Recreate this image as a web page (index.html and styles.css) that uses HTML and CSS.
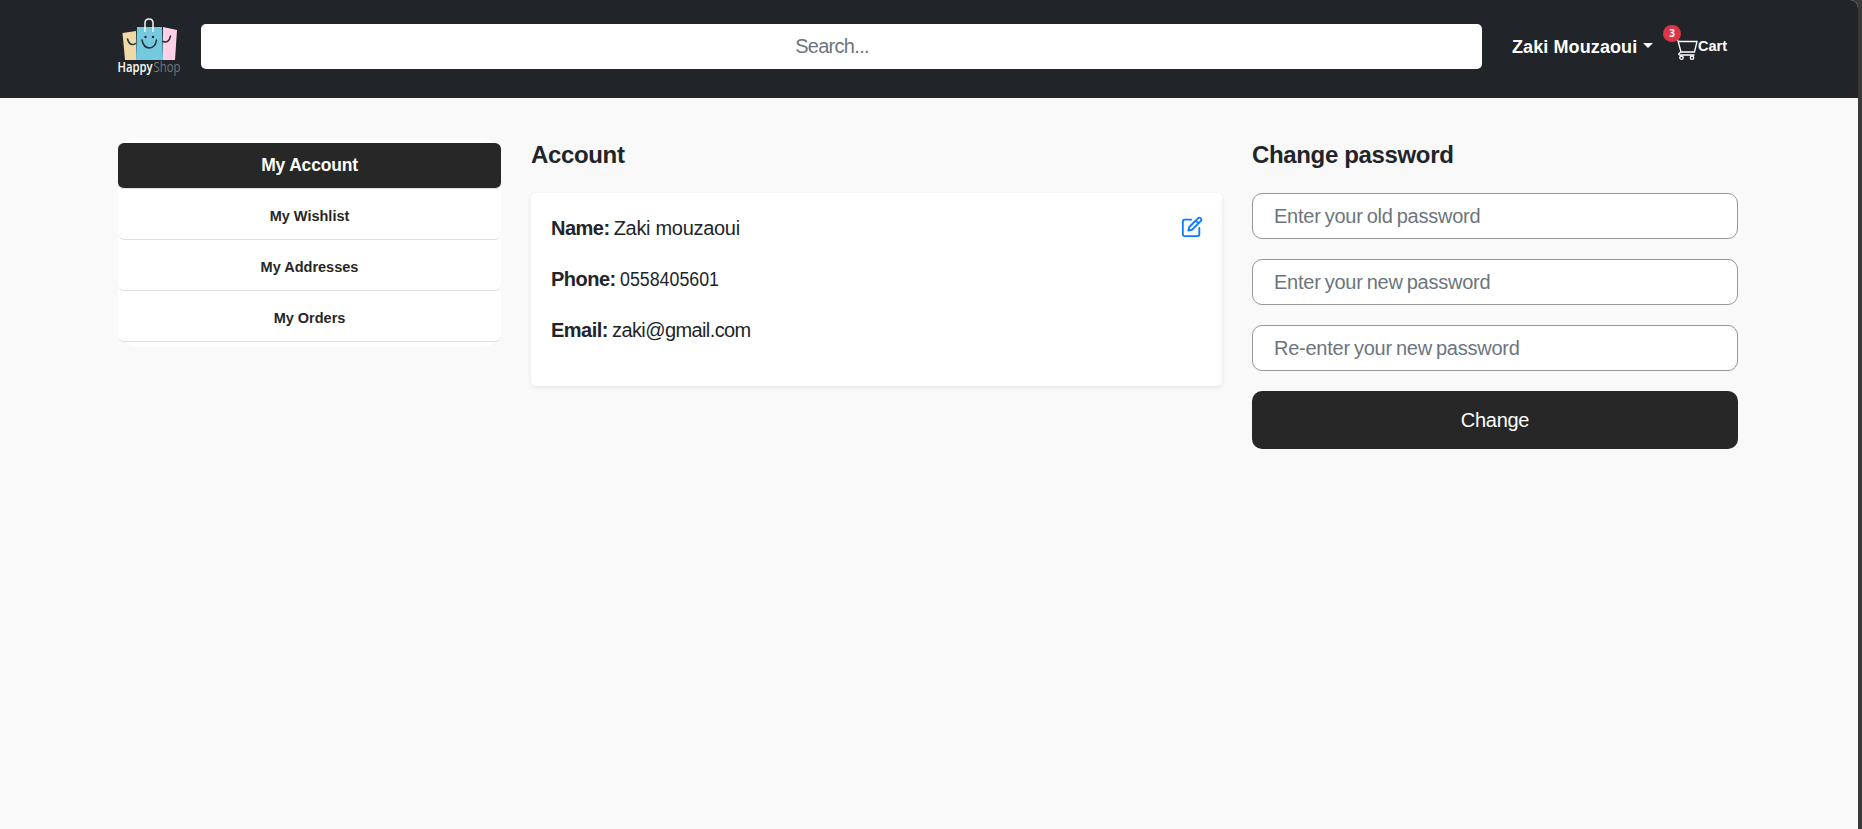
FILE: index.html
```html
<!DOCTYPE html>
<html lang="en">
<head>
<meta charset="utf-8">
<title>HappyShop - My Account</title>
<link rel="stylesheet" href="styles.css">
</head>
<body>
<div class="page">
  <header class="navbar">
    <svg class="logo" width="66" height="62" viewBox="0 0 66 62">
      <path d="M4.500 16 18 14V43H7Z" fill="#efd9a7"/>
      <path d="M45 10 59 13 57 43H45Z" fill="#ffd0e6"/>
      <path d="M19 10H44L45 43H18Z" fill="#74c9de"/>
      <g fill="none" stroke="#22313b" stroke-width="1.5" stroke-linecap="round">
        <path d="M24 23C26 33.500 37 33.500 38.500 23"/>
        <path d="M9.500 22C11 28 15 28.500 17.500 26.500"/>
        <path d="M45 24.500C49 26 51.500 24 52.500 19"/>
      </g>
      <circle cx="27.500" cy="20" r="1.200" fill="#22313b"/><circle cx="35" cy="20" r="1.200" fill="#22313b"/>
      <path d="M27 15V6C27 .5 35 .5 35 6V15" fill="none" stroke="#f2f6f7" stroke-width="1.500"/>
      <text class="logo-text" x="-.5" y="55" textLength="35" lengthAdjust="spacingAndGlyphs" font-weight="600" fill="#fff">Happy</text>
      <text class="logo-text" x="35.500" y="55" textLength="27" lengthAdjust="spacingAndGlyphs" fill="#73777b">Shop</text>
    </svg>
    <input class="search" type="text" placeholder="Search...">
    <div class="user">Zaki Mouzaoui<span class="caret"></span></div>
    <div class="cart">
      <svg class="cart-icon" width="21" height="22" viewBox="0 0 21 22" fill="none" stroke="#fff" stroke-width="1.300">
        <path d="M.5 0 4 13M1 2.500H20L17.500 13H4L2 14.500C1.500 15.500 2 16 3 16H17.500"/>
        <circle cx="4.500" cy="18.700" r="1.700"/><circle cx="15" cy="18.700" r="1.700"/>
      </svg>
      <span class="badge">3</span>
      <span class="cart-label">Cart</span>
    </div>
  </header>
  <main class="content">
    <nav class="menu">
      <a class="menu-item active">My Account</a>
      <a class="menu-item">My Wishlist</a>
      <a class="menu-item">My Addresses</a>
      <a class="menu-item">My Orders</a>
    </nav>
    <section class="account">
      <h2 class="title title-account">Account</h2>
      <div class="card">
        <div class="row"><b class="label">Name:</b><span class="value value-name">Zaki mouzaoui</span>
          <svg class="edit" width="22" height="22" viewBox="0 0 24 24" fill="none" stroke="#0d7bff" stroke-width="2" stroke-linecap="round" stroke-linejoin="round"><path d="M11 4H4a2 2 0 0 0-2 2v14a2 2 0 0 0 2 2h14a2 2 0 0 0 2-2v-7"/><path d="M18.500 2.500a2.121 2.121 0 0 1 3 3L12 15l-4 1 1-4 9.500-9.500zM16 5l3 3"/></svg>
        </div>
        <div class="row"><b class="label">Phone:</b><span class="value value-phone">0558405601</span></div>
        <div class="row"><b class="label">Email:</b><span class="value value-email">zaki@gmail.com</span></div>
      </div>
    </section>
    <section class="password">
      <h2 class="title">Change password</h2>
      <form class="form">
        <input class="field" type="password" placeholder="Enter your old password">
        <input class="field" type="password" placeholder="Enter your new password">
        <input class="field" type="password" placeholder="Re-enter your new password">
        <button class="change" type="button">Change</button>
      </form>
    </section>
  </main>
</div>
</body>
</html>
```
FILE: styles.css
```css
* { box-sizing: border-box; }
body {
  margin: 0;
  background: #3a3a3a;
  color: #212529;
  font-family: "Liberation Sans", Arial, sans-serif;
  overflow: hidden;
}
.page {
  width: 1858px;
  height: 829px;
  background: #f9f9f9;
  border-top-right-radius: 8px;
  overflow: hidden;
}
.navbar {
  height: 98px;
  padding: 0 120px 0 118px;
  background: #212529;
  color: #fff;
  display: flex;
  align-items: flex-start;
}
.logo { margin: 17px 17px 0 0; flex: none; overflow: visible; }
.logo-text { font-family: "Open Sans", sans-serif; font-size: 14px; }
.search {
  width: 1281px;
  height: 45px;
  margin-top: 24px;
  border: 0;
  border-radius: 5px;
  padding: 0 35px 0 16px;
  text-align: center;
  font-family: inherit;
  font-size: 20px;
  letter-spacing: -.7px;
}
.search::placeholder, .field::placeholder { color: #6c757d; opacity: 1; }
.user {
  margin: 35px 0 0 30px;
  width: 141px;
  font-size: 18px;
  line-height: 24px;
  font-weight: 700;
  white-space: nowrap;
  letter-spacing: .1px;
  display: flex;
}
.caret {
  margin: 8px 0 0 6px;
  width: 0;
  height: 0;
  border: 5px solid transparent;
  border-top-color: #fff;
  border-bottom: 0;
}
.cart { position: relative; margin: 39px 0 0 24px; display: flex; }
.cart-icon { flex: none; }
.badge {
  position: absolute;
  left: -14px;
  top: -14px;
  width: 18px;
  height: 17px;
  border-radius: 9px;
  background: #dc3545;
  font: 700 10px/17px "Open Sans", sans-serif;
  text-align: center;
}
.cart-label { font-size: 14.500px; line-height: 14px; font-weight: 700; }
.content {
  padding: 40px 0 0 118px;
  display: flex;
  gap: 30px;
  align-items: flex-start;
}
.menu {
  width: 383px;
  padding: 5px 0;
  background: #fff;
  border-radius: 20px;
}
.menu-item {
  height: 51px;
  display: flex;
  align-items: center;
  justify-content: center;
  background: #fff;
  border-bottom: 1px solid #dee2e6;
  border-radius: 6px;
  font-size: 14.500px;
  font-weight: 700;
  color: #272727;
  padding-top: 4px;
}
.menu-item.active {
  height: 46px;
  padding: 0 0 1px;
  background: #272727;
  color: #fff;
  font-size: 17.500px;
  letter-spacing: -.2px;
}
.account { width: 691px; padding-top: 2px; }
.password { width: 486px; padding-top: 2px; }
.title {
  margin: 0 0 23px;
  font-size: 24px;
  line-height: 30px;
  font-weight: 700;
  letter-spacing: -.35px;
}
.card {
  height: 193px;
  padding: 20px 19px 0 20px;
  background: #fff;
  border-radius: 5px;
  box-shadow: 0 2px 4px rgba(0, 0, 0, .075);
}
.row {
  height: 51px;
  display: flex;
  gap: 4px;
  font-size: 20px;
  line-height: 30px;
  white-space: nowrap;
}
.label { letter-spacing: -.5px; }
.value { letter-spacing: -.3px; }
.value-email { letter-spacing: -.6px; }
.value-phone { letter-spacing: 0; transform: scaleX(.89); transform-origin: left; }
.edit { margin: 3px 0 0 auto; }
.form { display: flex; flex-direction: column; gap: 20px; }
.field {
  height: 46px;
  border: 1px solid #979797;
  border-radius: 10px;
  padding: 0 21px;
  background: #fff;
  font-family: inherit;
  font-size: 20px;
  letter-spacing: -.25px;
  word-spacing: -1.200px;
}
.change {
  height: 58px;
  border: 0;
  border-radius: 10px;
  background: #272727;
  color: #fff;
  font-family: inherit;
  font-size: 20px;
  letter-spacing: -.3px;
}
```
